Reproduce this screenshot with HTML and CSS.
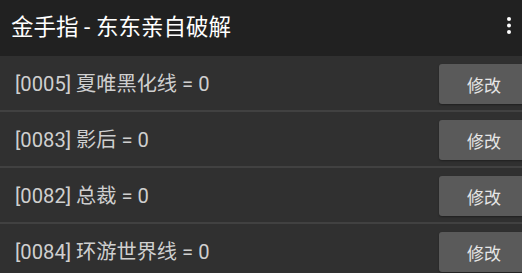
FILE: index.html
```html
<!DOCTYPE html>
<html lang="zh-CN">
<head>
<meta charset="utf-8">
<title>金手指</title>
<link rel="stylesheet" href="styles.css">
</head>
<body>
<div class="app">
  <header class="bar">
    <div class="title">金手指 - 东东亲自破解</div>
    <svg class="more" width="6" height="17" viewBox="0 0 6 17">
      <circle cx="3" cy="2" r="2" fill="#fff"/>
      <circle cx="3" cy="8.5" r="2" fill="#fff"/>
      <circle cx="3" cy="15" r="2" fill="#fff"/>
    </svg>
  </header>
  <ul class="list">
    <li class="row"><span class="label">[0005] 夏唯黑化线 = 0</span><button class="btn">修改</button></li>
    <li class="row"><span class="label">[0083] 影后 = 0</span><button class="btn">修改</button></li>
    <li class="row"><span class="label">[0082] 总裁 = 0</span><button class="btn">修改</button></li>
    <li class="row"><span class="label">[0084] 环游世界线 = 0</span><button class="btn">修改</button></li>
  </ul>
</div>
</body>
</html>
```
FILE: styles.css
```css
html, body {
  margin: 0;
  padding: 0;
  background: #303030;
  overflow: hidden;
}
.app {
  width: 522px;
  height: 273px;
  overflow: hidden;
  font-family: Roboto, "Noto Sans CJK SC", sans-serif;
}
.bar {
  height: 56px;
  background: #212121;
  display: flex;
  align-items: flex-start;
  padding-left: 11px;
  padding-right: 10px;
}
.title {
  flex: 1;
  color: #ffffff;
  font-size: 22.5px;
  line-height: 54px;
}
.more {
  margin-top: 17px;
}
.list {
  list-style: none;
  margin: 0;
  padding: 0;
}
.row {
  height: 54px;
  border-bottom: 2px solid #414141;
  display: flex;
  align-items: flex-start;
  padding-left: 15px;
}
.label {
  flex: 1;
  color: #cfcfcf;
  font-size: 20.2px;
  line-height: 56px;
  white-space: nowrap;
}
.btn {
  flex: none;
  width: 90px;
  height: 40px;
  margin-top: 8px;
  margin-right: -7px;
  background: #5a5a5a;
  border: none;
  border-radius: 3px;
  color: #e6e6e6;
  font-family: Roboto, "Noto Sans CJK SC", sans-serif;
  font-size: 17px;
  padding: 0;
  box-shadow: 0 1px 2px rgba(0,0,0,0.35);
}
```
